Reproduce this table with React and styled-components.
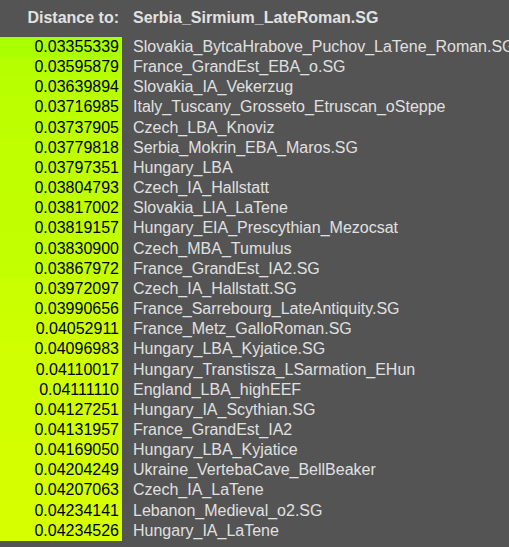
import styled, { createGlobalStyle } from 'styled-components';

const GlobalStyle = createGlobalStyle`
    html, body {
        margin: 0;
        padding: 0;
        background: #545454;
    }
    body {
        font-family: "Liberation Sans", Arial, sans-serif;
        font-size: 16px;
    }
`;

const Table = styled.div`
    width: 509px;
    height: 547px;
    overflow: hidden;
    display: flex;
    flex-direction: column;
`;

const Row = styled.div`
    display: flex;
    gap: 11px;
    flex: none;
    height: ${p => (p.head ? '37px' : '20.16px')};
    line-height: ${p => (p.head ? '35px' : '20px')};
`;

const HeadCell = styled.div`
    font-weight: bold;
    color: #e2e2e2;
    white-space: nowrap;
    width: ${p => (p.right ? '119px' : 'auto')};
    text-align: ${p => (p.right ? 'right' : 'left')};
    padding-right: ${p => (p.right ? '3px' : '0')};
`;

const Value = styled.div`
    width: 119px;
    flex: none;
    text-align: right;
    padding-right: 3px;
    color: #000;
`;

const Name = styled.div`
    color: #e0e0e0;
    white-space: nowrap;
`;

const rows = [
    ['0.03355339', 'Slovakia_BytcaHrabove_Puchov_LaTene_Roman.SG'],
    ['0.03595879', 'France_GrandEst_EBA_o.SG'],
    ['0.03639894', 'Slovakia_IA_Vekerzug'],
    ['0.03716985', 'Italy_Tuscany_Grosseto_Etruscan_oSteppe'],
    ['0.03737905', 'Czech_LBA_Knoviz'],
    ['0.03779818', 'Serbia_Mokrin_EBA_Maros.SG'],
    ['0.03797351', 'Hungary_LBA'],
    ['0.03804793', 'Czech_IA_Hallstatt'],
    ['0.03817002', 'Slovakia_LIA_LaTene'],
    ['0.03819157', 'Hungary_EIA_Prescythian_Mezocsat'],
    ['0.03830900', 'Czech_MBA_Tumulus'],
    ['0.03867972', 'France_GrandEst_IA2.SG'],
    ['0.03972097', 'Czech_IA_Hallstatt.SG'],
    ['0.03990656', 'France_Sarrebourg_LateAntiquity.SG'],
    ['0.04052911', 'France_Metz_GalloRoman.SG'],
    ['0.04096983', 'Hungary_LBA_Kyjatice.SG'],
    ['0.04110017', 'Hungary_Transtisza_LSarmation_EHun'],
    ['0.04111110', 'England_LBA_highEEF'],
    ['0.04127251', 'Hungary_IA_Scythian.SG'],
    ['0.04131957', 'France_GrandEst_IA2'],
    ['0.04169050', 'Hungary_LBA_Kyjatice'],
    ['0.04204249', 'Ukraine_VertebaCave_BellBeaker'],
    ['0.04207063', 'Czech_IA_LaTene'],
    ['0.04234141', 'Lebanon_Medieval_o2.SG'],
    ['0.04234526', 'Hungary_IA_LaTene'],
];

const min = parseFloat(rows[0][0]);
const max = parseFloat(rows[rows.length - 1][0]);

const cellColor = (v) => {
    const t = (parseFloat(v) - min) / (max - min);
    const r = Math.round(170 + t * 44);
    return `rgb(${r}, 255, 0)`;
};

const App = () => {
    let list = [];

    rows.forEach(([value, name]) => {
        list.push(
            <Row key={name}>
                <Value style={{ background: cellColor(value) }}>{value}</Value>
                <Name>{name}</Name>
            </Row>
        );
    });

    return (
        <>
            <GlobalStyle />
            <Table>
                <Row head>
                    <HeadCell right>Distance to:</HeadCell>
                    <HeadCell>Serbia_Sirmium_LateRoman.SG</HeadCell>
                </Row>
                {list}
            </Table>
        </>
    );
};

export default App;
